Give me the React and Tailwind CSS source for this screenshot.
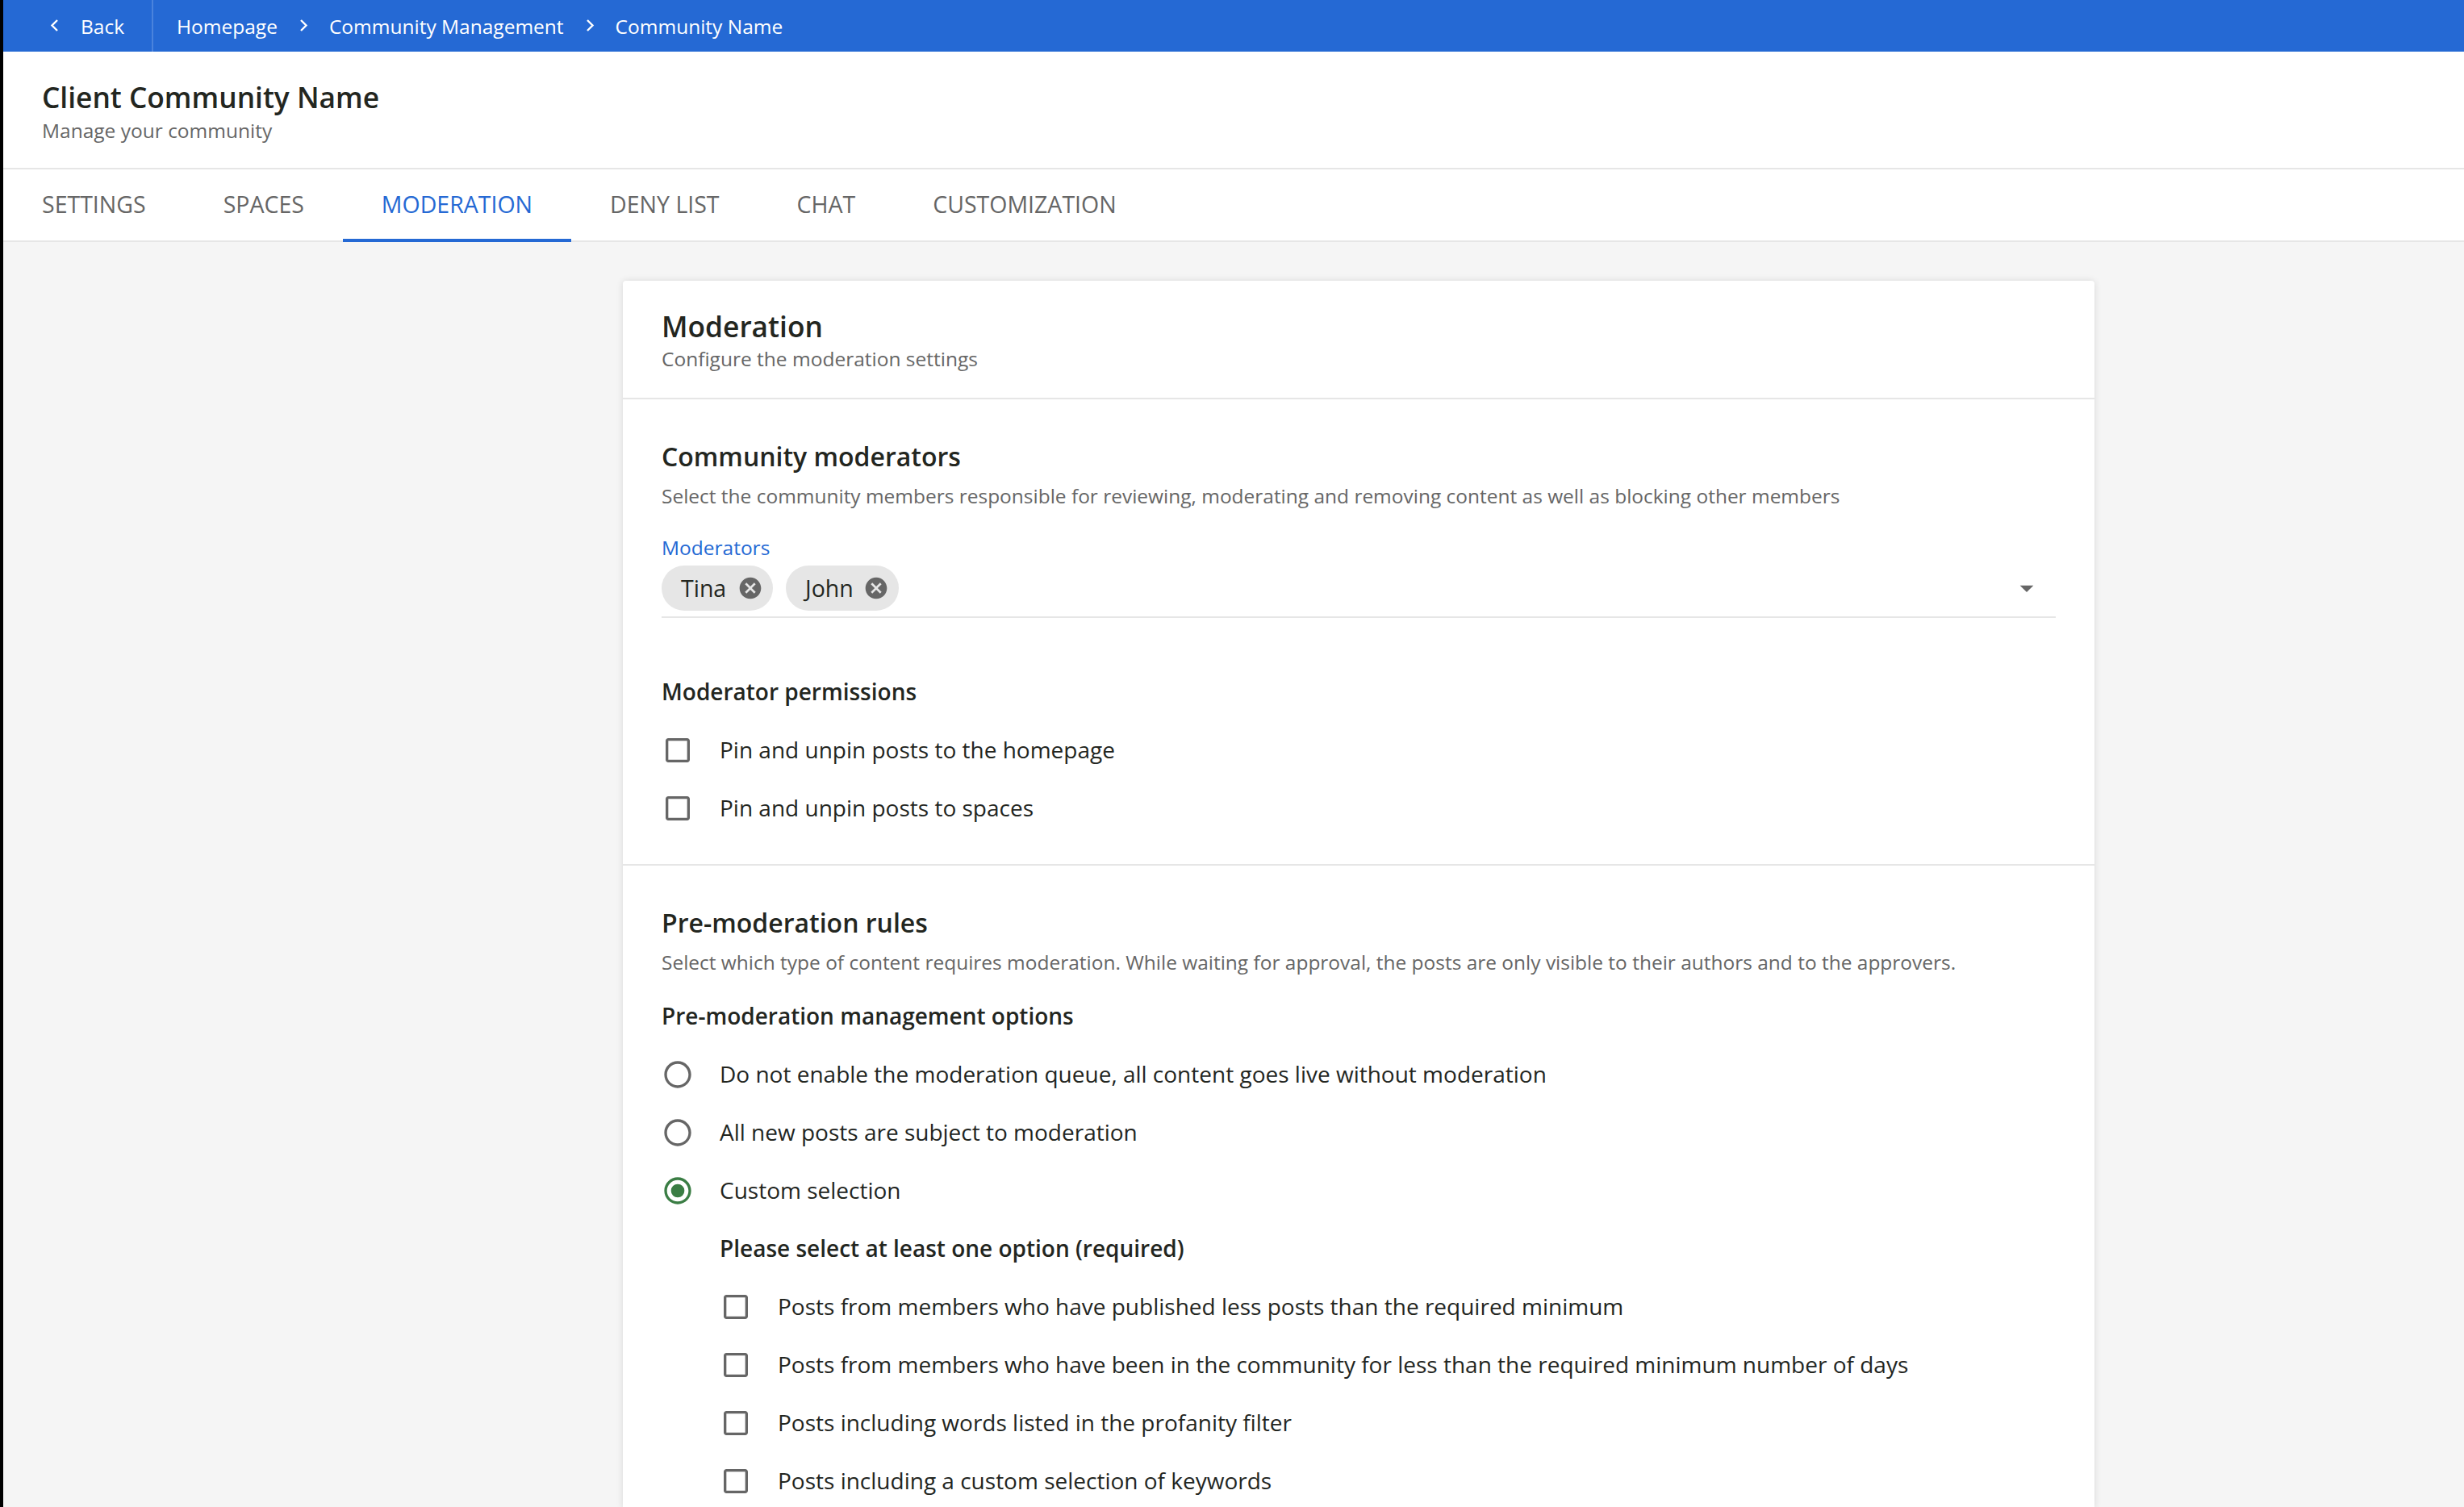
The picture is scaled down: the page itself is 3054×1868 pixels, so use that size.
const Box = () => (
  <svg viewBox="0 0 24 24" className="w-10 h-10 mt-0.5 shrink-0 fill-[#666666]">
    <path d="M19 5v14H5V5h14m0-2H5c-1.1 0-2 .9-2 2v14c0 1.1.9 2 2 2h14c1.1 0 2-.9 2-2V5c0-1.1-.9-2-2-2z" />
  </svg>
);
const Radio = ({ on }) => (
  <svg viewBox="0 0 24 24" className={on ? "w-10 h-10 mt-0.5 shrink-0 fill-[#3a7d44]" : "w-10 h-10 mt-0.5 shrink-0 fill-[#666666]"}>
    <path d="M12 2C6.48 2 2 6.48 2 12s4.48 10 10 10 10-4.48 10-10S17.52 2 12 2zm0 18c-4.42 0-8-3.58-8-8s3.58-8 8-8 8 3.58 8 8-3.58 8-8 8z" />
    {on && <circle cx="12" cy="12" r="5" />}
  </svg>
);
const Chevron = ({ left }) => (
  <svg viewBox="0 0 24 24" className="w-6 h-6 shrink-0 fill-none stroke-white stroke-[2.4]">
    <path d={left ? "M15 5l-6.5 6.5L15 18" : "M9 5l6.5 6.5L9 18"} />
  </svg>
);
const Chip = ({ name, w }) => (
  <div className={"flex items-center justify-between h-14 rounded-[28px] bg-[#e6e6e6] pl-6 pr-3 " + w}>
    <span className="text-[28.5px] leading-10 text-[#23261f]">{name}</span>
    <svg viewBox="0 0 24 24" className="w-8 h-8 fill-[#666666]">
      <path d="M12 2C6.47 2 2 6.47 2 12s4.47 10 10 10 10-4.47 10-10S17.53 2 12 2zm5 13.59L15.59 17 12 13.41 8.41 17 7 15.59 10.59 12 7 8.41 8.41 7 12 10.59 15.59 7 17 8.41 13.41 12 17 15.59z" />
    </svg>
  </div>
);
const Row = ({ icon, children }) => (
  <div className="flex items-center h-[72px] gap-8 text-[28px] text-[#23261f]">
    {icon}
    <span>{children}</span>
  </div>
);
const tabs = ["SETTINGS", "SPACES", "MODERATION", "DENY LIST", "CHAT", "CUSTOMIZATION"];

export default function App() {
  return (
    <div className="flex h-[1868px] overflow-hidden bg-black font-['Open_Sans',sans-serif]">
      <div className="w-1 shrink-0" />
      <div className="flex-1 flex flex-col bg-[#f5f5f5] min-w-0">
        <div className="flex items-center h-16 bg-[#2569d4] text-white text-[24.5px] shrink-0">
          <div className="flex items-center h-full w-[186px] pl-[52px] gap-5 border-r-2 border-[#4a83dd]">
            <Chevron left />
            <span className="pt-0.5">Back</span>
          </div>
          <div className="flex items-center pl-[29px]">
            <span className="pt-0.5">Homepage</span>
            <span className="mx-5"><Chevron /></span>
            <span className="pt-0.5">Community Management</span>
            <span className="mx-5"><Chevron /></span>
            <span className="pt-0.5">Community Name</span>
          </div>
        </div>
        <div className="h-[146px] shrink-0 bg-white border-b-2 border-[#e6e6e6] pl-12 pt-[33px]">
          <div className="text-[35.3px] leading-[46px] font-semibold text-[#23261f]">Client Community Name</div>
          <div className="text-[24.5px] leading-[34px] mt-0.5 text-[#666666]">Manage your community</div>
        </div>
        <div className="flex h-[90px] shrink-0 bg-white border-b-2 border-[#e6e6e6]">
          {tabs.map((t) => (
            <div
              key={t}
              className={
                t === "MODERATION"
                  ? "flex items-center h-[90px] px-12 text-[28.5px] text-[#2569d4] border-b-4 border-[#2569d4]"
                  : "flex items-center h-[88px] px-12 text-[28.5px] text-[#666666] pb-0.5"
              }
            >
              {t}
            </div>
          ))}
        </div>
        <div className="ml-[768px] mt-12 w-[1824px] bg-white shadow-[0_0_8px_rgba(0,0,0,0.12)] rounded-[4px]">
          <div className="h-[147px] px-12 pt-[31px] border-b-2 border-[#e6e6e6]">
            <div className="text-[35.3px] leading-[50px] font-semibold text-[#23261f]">Moderation</div>
            <div className="text-[24.5px] leading-[34px] -mt-px text-[#666666]">Configure the moderation settings</div>
          </div>
          <div className="h-[578px] px-12 pt-[49px] border-b-2 border-[#e6e6e6]">
            <div className="text-[32px] leading-[44px] font-semibold text-[#23261f]">Community moderators</div>
            <div className="text-[24.48px] leading-[34px] mt-[10px] text-[#666666]">
              Select the community members responsible for reviewing, moderating and removing content as well as blocking other members
            </div>
            <div className="text-[24.5px] leading-[34px] mt-[30px] text-[#2569d4]">Moderators</div>
            <div className="flex items-center justify-between h-[65px] pb-[7px] mt-[5px] border-b-2 border-[#e6e6e6]">
              <div className="flex gap-4">
                <Chip name="Tina" w="w-[138px]" />
                <Chip name="John" w="w-[140px]" />
              </div>
              <svg viewBox="0 0 24 24" className="w-10 h-10 mr-4 fill-[#666666]"><path d="M7 10l5 5 5-5z" /></svg>
            </div>
            <div className="text-[28px] leading-10 font-semibold text-[#23261f] mt-[71px]">Moderator permissions</div>
            <div className="mt-[16px]">
              <Row icon={<Box />}>Pin and unpin posts to the homepage</Row>
              <Row icon={<Box />}>Pin and unpin posts to spaces</Row>
            </div>
          </div>
          <div className="px-12 pt-[49px]">
            <div className="text-[32px] leading-[44px] font-semibold text-[#23261f]">Pre-moderation rules</div>
            <div className="text-[24.48px] leading-[34px] mt-[10px] text-[#666666]">
              Select which type of content requires moderation. While waiting for approval, the posts are only visible to their authors and to the approvers.
            </div>
            <div className="text-[28px] leading-10 font-semibold text-[#23261f] mt-[29px]">Pre-moderation management options</div>
            <div className="mt-[16px]">
              <Row icon={<Radio />}>Do not enable the moderation queue, all content goes live without moderation</Row>
              <Row icon={<Radio />}>All new posts are subject to moderation</Row>
              <Row icon={<Radio on />}>Custom selection</Row>
            </div>
            <div className="pl-[72px]">
              <div className="flex items-center h-[72px] text-[28px] font-semibold text-[#23261f]">Please select at least one option (required)</div>
              <Row icon={<Box />}>Posts from members who have published less posts than the required minimum</Row>
              <Row icon={<Box />}>Posts from members who have been in the community for less than the required minimum number of days</Row>
              <Row icon={<Box />}>Posts including words listed in the profanity filter</Row>
              <Row icon={<Box />}>Posts including a custom selection of keywords</Row>
            </div>
          </div>
        </div>
      </div>
    </div>
  );
}
